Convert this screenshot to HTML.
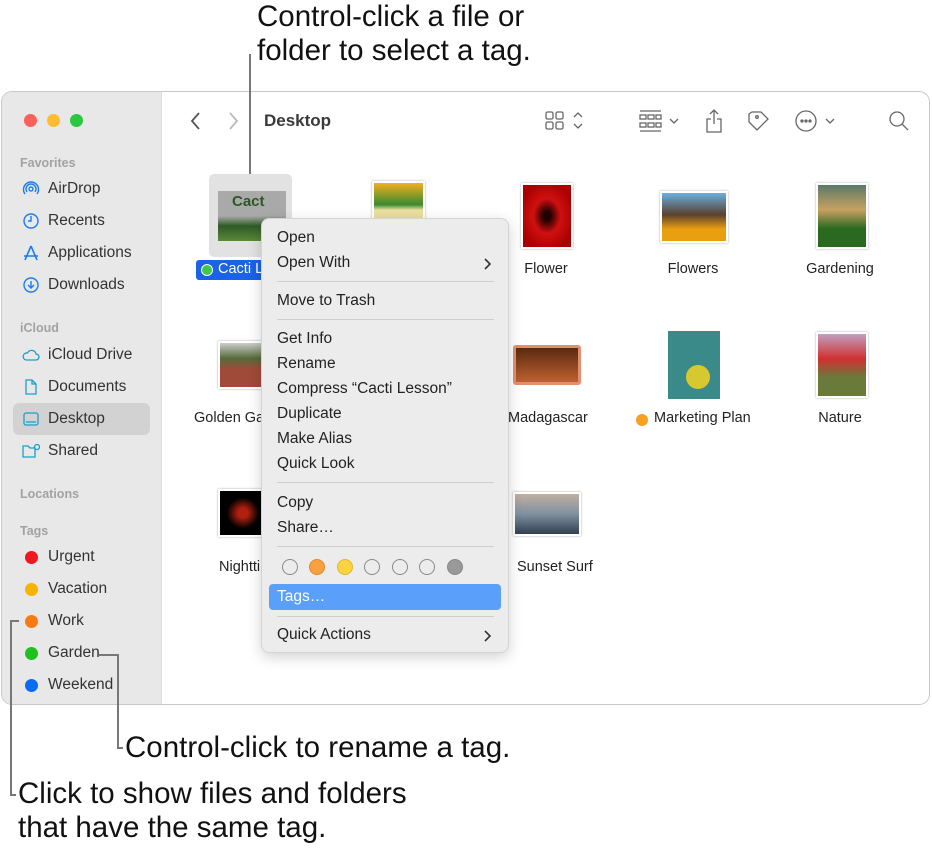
<!DOCTYPE html>
<html><head><style>
*{margin:0;padding:0;box-sizing:border-box}
body{width:932px;height:852px;background:#fff;font-family:"Liberation Sans",sans-serif;position:relative;overflow:hidden;color:#222}
.a{position:absolute}
.cap{font-size:29.5px;color:#111;line-height:34px;white-space:nowrap}
.win{left:1px;top:91px;width:929px;height:614px;border:1px solid #c8c8c8;border-radius:11px;overflow:hidden;background:#fff}
.side{left:0;top:0;width:160px;height:100%;background:#e8e8e8;border-right:1px solid #ddd}
.sh{font-size:12.5px;color:#a2a2a2;font-weight:bold;left:18px}
.si{font-size:15.5px;color:#333;left:46px}
.ic{left:20px;width:18px;height:18px}
.dot{left:23px;width:13px;height:13px;border-radius:50%}
.lbl{font-size:14.5px;color:#222;text-align:center;width:140px}
.th{border:2px solid #fff;box-shadow:0 0 2px rgba(0,0,0,.35)}
.menu{left:261px;top:218px;width:248px;height:435px;background:#ececec;border:1px solid #d4d4d4;border-radius:8px;box-shadow:0 4px 14px rgba(0,0,0,.18)}
.mi{left:15px;font-size:15.5px;color:#222}
.sep{left:15px;width:217px;height:1px;background:#cfcfcf}
.ln{background:#777}
.c{width:16px;height:16px;border-radius:50%;top:340px;border:1.5px solid #8a8a8a}
</style></head><body>
<div class="a cap" style="left:257px;top:0">Control-click a file or<br>folder to select a tag.</div>

<div class="a win">
 <div class="a side">
  <div class="a" style="left:22px;top:22px;width:13px;height:13px;border-radius:50%;background:#fe5f57"></div>
  <div class="a" style="left:45px;top:22px;width:13px;height:13px;border-radius:50%;background:#febc2e"></div>
  <div class="a" style="left:68px;top:22px;width:13px;height:13px;border-radius:50%;background:#28c840"></div>
  <div class="a sh" style="top:64px">Favorites</div>
  <svg class="a ic" style="top:88px" viewBox="0 0 18 18" fill="none" stroke="#1a7cf0" stroke-width="1.4"><circle cx="9" cy="9" r="2"/><path d="M5 12a5 5 0 1 1 8 0M3 14a7.5 7.5 0 1 1 12 0"/></svg>
  <div class="a si" style="top:88px">AirDrop</div>
  <svg class="a ic" style="top:120px" viewBox="0 0 18 18" fill="none" stroke="#1a7cf0" stroke-width="1.4"><circle cx="9" cy="9" r="7"/><path d="M9 4v5H6"/></svg>
  <div class="a si" style="top:120px">Recents</div>
  <svg class="a ic" style="top:152px" viewBox="0 0 18 18" fill="none" stroke="#1a7cf0" stroke-width="1.6"><path d="M9 2L3 16M9 2l6 14M2 12h14"/></svg>
  <div class="a si" style="top:152px">Applications</div>
  <svg class="a ic" style="top:184px" viewBox="0 0 18 18" fill="none" stroke="#1a7cf0" stroke-width="1.4"><circle cx="9" cy="9" r="7"/><path d="M9 5v7M6 9l3 3 3-3"/></svg>
  <div class="a si" style="top:184px">Downloads</div>
  <div class="a sh" style="top:229px">iCloud</div>
  <svg class="a ic" style="top:254px" viewBox="0 0 18 18" fill="none" stroke="#1aa0c8" stroke-width="1.3"><path d="M4 14h10a3 3 0 0 0 0-6 4.5 4.5 0 0 0-8.5-1A3.5 3.5 0 0 0 4 14z"/></svg>
  <div class="a si" style="top:254px">iCloud Drive</div>
  <svg class="a ic" style="top:286px" viewBox="0 0 18 18" fill="none" stroke="#1aa0c8" stroke-width="1.3"><path d="M4 2h6l4 4v10H4zM10 2v4h4"/></svg>
  <div class="a si" style="top:286px">Documents</div>
  <div class="a" style="left:11px;top:311px;width:137px;height:32px;background:#d2d2d2;border-radius:6px"></div>
  <svg class="a ic" style="top:318px" viewBox="0 0 18 18" fill="none" stroke="#1aa0c8" stroke-width="1.3"><rect x="2" y="3" width="14" height="12" rx="2"/><path d="M4 12h10"/></svg>
  <div class="a si" style="top:318px">Desktop</div>
  <svg class="a ic" style="top:350px" viewBox="0 0 18 18" fill="none" stroke="#1aa0c8" stroke-width="1.3"><path d="M1 4h5l2 2h5v9H1z"/><circle cx="15" cy="5" r="2.5"/></svg>
  <div class="a si" style="top:350px">Shared</div>
  <div class="a sh" style="top:395px">Locations</div>
  <div class="a sh" style="top:432px">Tags</div>
  <div class="a dot" style="top:459px;background:#f0181e"></div><div class="a si" style="top:456px">Urgent</div>
  <div class="a dot" style="top:491px;background:#f6b300"></div><div class="a si" style="top:488px">Vacation</div>
  <div class="a dot" style="top:523px;background:#fb7a10"></div><div class="a si" style="top:520px">Work</div>
  <div class="a dot" style="top:555px;background:#20c020"></div><div class="a si" style="top:552px">Garden</div>
  <div class="a dot" style="top:587px;background:#0a6cf5"></div><div class="a si" style="top:584px">Weekend</div>
 </div>
 <svg class="a" style="left:185px;top:19px" width="60" height="20" fill="none" stroke-width="1.8"><path d="M12 2l-7 8 7 8" stroke="#555"/><path d="M43 2l7 8-7 8" stroke="#bbb"/></svg>
 <div class="a" style="left:262px;top:19px;font-size:17px;font-weight:bold;color:#3a3a3a">Desktop</div>
 <svg class="a" style="left:540px;top:16px" width="380" height="26" fill="none" stroke="#666" stroke-width="1.3">
  <rect x="4" y="4" width="7" height="7" rx="1.5"/><rect x="14" y="4" width="7" height="7" rx="1.5"/><rect x="4" y="14" width="7" height="7" rx="1.5"/><rect x="14" y="14" width="7" height="7" rx="1.5"/>
  <path d="M32 9l4-4 4 4M32 16l4 4 4-4"/>
  <path d="M98 3h21M98 23h21"/><rect x="98" y="7" width="6" height="4"/><rect x="106" y="7" width="6" height="4"/><rect x="114" y="7" width="5" height="4"/><rect x="98" y="15" width="6" height="4"/><rect x="106" y="15" width="6" height="4"/><rect x="114" y="15" width="5" height="4"/>
  <path d="M128 11l4 4 4-4"/>
  <path d="M172 2v14M168 6l4-4 4 4M169 11h-4v13h14V11h-4"/>
  <path d="M210 4h9l7 7-11 11-8-8V6z"/><circle cx="215" cy="9" r="1.3"/>
  <circle cx="264" cy="13" r="10"/><circle cx="260" cy="13" r="1" fill="#666"/><circle cx="264" cy="13" r="1" fill="#666"/><circle cx="268" cy="13" r="1" fill="#666"/>
  <path d="M284 11l4 4 4-4"/>
  <circle cx="355" cy="11" r="7"/><path d="M360 16l6 6"/>
 </svg>
 <div class="a" style="left:207px;top:82px;width:83px;height:83px;background:#e2e2e2;border-radius:5px"></div>
 <div class="a" style="left:216px;top:99px;width:68px;height:50px;background:linear-gradient(#a9a9a9 50%,#2f5a26 70%,#5a8a3a);"><div style="font-weight:bold;font-size:15px;color:#2a5a22;padding:2px 0 0 14px">Cact</div></div>
 <div class="a" style="left:194px;top:168px;width:80px;height:20px;background:#1a62e6;border-radius:3px;color:#fff;font-size:14.5px;padding:1px 0 0 22px">Cacti L</div>
 <div class="a" style="left:199px;top:172px;width:12px;height:12px;border-radius:50%;background:#3ec84a;border:1px solid #fff"></div>
 <div class="a th" style="left:370px;top:89px;width:53px;height:40px;background:linear-gradient(#f4b020,#3a8a30 60%,#eadfa0 75%)"></div>
 <div class="a th" style="left:519px;top:91px;width:52px;height:66px;background:radial-gradient(#200 10%,#d01010 40%,#a00 80%)"></div>
 <div class="a lbl" style="left:474px;top:169px">Flower</div>
 <div class="a th" style="left:658px;top:99px;width:68px;height:52px;background:linear-gradient(#6ab0e0,#5a4030 45%,#e8a010 75%)"></div>
 <div class="a lbl" style="left:621px;top:169px">Flowers</div>
 <div class="a th" style="left:814px;top:91px;width:52px;height:66px;background:linear-gradient(#5a7a6a,#c8a060 40%,#2a6a20 70%)"></div>
 <div class="a lbl" style="left:768px;top:169px">Gardening</div>
 <div class="a th" style="left:216px;top:249px;width:50px;height:48px;background:linear-gradient(#ccc,#556b3a 35%,#a04a3a 60%)"></div>
 <div class="a lbl" style="left:192px;top:318px;text-align:left">Golden Ga</div>
 <div class="a" style="left:511px;top:253px;width:68px;height:40px;background:linear-gradient(#5a2a10,#c06030);border:3px solid #e09070;border-radius:3px"></div>
 <div class="a lbl" style="left:506px;top:318px;text-align:left">Madagascar</div>
 <div class="a" style="left:666px;top:239px;width:52px;height:68px;background:#3a8a8a"><div style="position:absolute;left:18px;top:34px;width:24px;height:24px;border-radius:50%;background:#d8c830"></div></div>
 <div class="a" style="left:634px;top:322px;width:12px;height:12px;border-radius:50%;background:#f9a020"></div>
 <div class="a" style="left:652px;top:318px;font-size:14.5px">Marketing Plan</div>
 <div class="a th" style="left:814px;top:240px;width:52px;height:66px;background:linear-gradient(#c0a0c0,#d03030 40%,#6a7a3a 70%)"></div>
 <div class="a lbl" style="left:768px;top:318px">Nature</div>
 <div class="a th" style="left:216px;top:397px;width:50px;height:48px;background:radial-gradient(#b02010 15%,#000 50%)"></div>
 <div class="a lbl" style="left:217px;top:467px;text-align:left">Nightti</div>
 <div class="a th" style="left:511px;top:400px;width:68px;height:44px;background:linear-gradient(#c0b0a0,#8090a0 50%,#304050)"></div>
 <div class="a lbl" style="left:515px;top:467px;text-align:left">Sunset Surf</div>
</div>

<div class="a menu">
 <div class="a mi" style="top:10px">Open</div>
 <div class="a mi" style="top:35px">Open With</div>
 <svg class="a" style="left:221px;top:38px" width="10" height="14" fill="none" stroke="#333" stroke-width="1.6"><path d="M2 2l5 5-5 5"/></svg>
 <div class="a sep" style="top:62px"></div>
 <div class="a mi" style="top:73px">Move to Trash</div>
 <div class="a sep" style="top:100px"></div>
 <div class="a mi" style="top:111px">Get Info</div>
 <div class="a mi" style="top:136px">Rename</div>
 <div class="a mi" style="top:161px">Compress “Cacti Lesson”</div>
 <div class="a mi" style="top:186px">Duplicate</div>
 <div class="a mi" style="top:211px">Make Alias</div>
 <div class="a mi" style="top:236px">Quick Look</div>
 <div class="a sep" style="top:263px"></div>
 <div class="a mi" style="top:275px">Copy</div>
 <div class="a mi" style="top:300px">Share…</div>
 <div class="a sep" style="top:327px"></div>
 <div class="a c" style="left:20px"></div>
 <div class="a c" style="left:47px;background:#f9a040;border-color:#e08830"></div>
 <div class="a c" style="left:75px;background:#fcd440;border-color:#e0b830"></div>
 <div class="a c" style="left:102px"></div>
 <div class="a c" style="left:130px"></div>
 <div class="a c" style="left:157px"></div>
 <div class="a c" style="left:185px;background:#999;border-color:#888"></div>
 <div class="a" style="left:7px;top:365px;width:232px;height:26px;background:#5aa0fa;border-radius:4px;color:#fff;font-size:15.5px;padding:4px 0 0 8px">Tags…</div>
 <div class="a sep" style="top:397px"></div>
 <div class="a mi" style="top:407px">Quick Actions</div>
 <svg class="a" style="left:221px;top:410px" width="10" height="14" fill="none" stroke="#333" stroke-width="1.6"><path d="M2 2l5 5-5 5"/></svg>
</div>

<div class="a ln" style="left:249px;top:54px;width:2px;height:120px"></div>
<div class="a ln" style="left:10px;top:620px;width:2px;height:176px"></div>
<div class="a ln" style="left:10px;top:620px;width:9px;height:2px"></div>
<div class="a ln" style="left:10px;top:794px;width:6px;height:2px"></div>
<div class="a ln" style="left:99px;top:654px;width:20px;height:2px"></div>
<div class="a ln" style="left:117px;top:654px;width:2px;height:95px"></div>
<div class="a ln" style="left:117px;top:747px;width:6px;height:2px"></div>
<div class="a cap" style="left:125px;top:731px">Control-click to rename a tag.</div>
<div class="a cap" style="left:18px;top:777px">Click to show files and folders<br>that have the same tag.</div>
</body></html>
